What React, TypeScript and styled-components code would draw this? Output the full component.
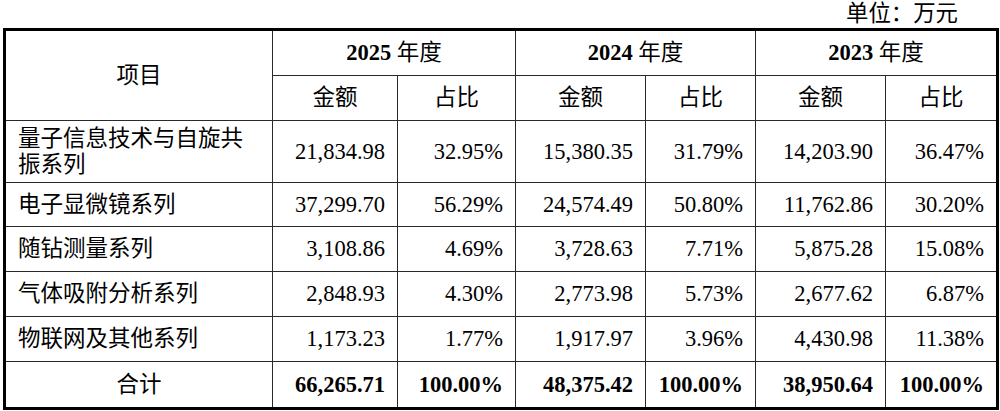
import React from "react";
import styled, { createGlobalStyle } from "styled-components";

const GlobalStyle = createGlobalStyle`
  html, body {
    margin: 0;
    padding: 0;
    background: #ffffff;
  }
  body {
    font-family: "Liberation Serif", "Noto Sans CJK SC", serif;
    color: #000;
  }
`;

const Page = styled.div`
  width: 1000px;
  height: 411px;
  display: flex;
  flex-direction: column;
  padding-left: 3px;
  box-sizing: border-box;
  overflow: hidden;
`;

const UnitLine = styled.div`
  height: 28px;
  display: flex;
  align-items: center;
  justify-content: flex-end;
  padding-right: 42px;
  font-size: 22.4px;
  line-height: 28px;
`;

const Table = styled.table`
  width: 993px;
  table-layout: fixed;
  border-collapse: collapse;
  border: 3px solid #000;
  font-size: 22.5px;
  line-height: 26px;
`;

const Row = styled.tr<{ $h: number }>`
  height: ${(p) => p.$h}px;
`;

const Cell = styled.td<{ $align?: "left" | "center" | "right"; $bold?: boolean }>`
  border: 1px solid #2a2a2a;
  padding: 0 12px;
  vertical-align: middle;
  text-align: ${(p) => p.$align ?? "right"};
  font-weight: ${(p) => (p.$bold ? 700 : 400)};
  word-break: break-all;
`;

const HeadCell = styled.th`
  border: 1px solid #2a2a2a;
  padding: 0 8px;
  vertical-align: middle;
  text-align: center;
  font-weight: 400;
`;

const Year = styled.b`
  font-weight: 700;
`;

const colWidths = [268, 125, 118, 130, 110, 130, 112];

type DataRow = { name: string; vals: string[]; h: number };

const rows: DataRow[] = [
  { name: "量子信息技术与自旋共振系列", vals: ["21,834.98", "32.95%", "15,380.35", "31.79%", "14,203.90", "36.47%"], h: 62 },
  { name: "电子显微镜系列", vals: ["37,299.70", "56.29%", "24,574.49", "50.80%", "11,762.86", "30.20%"], h: 44 },
  { name: "随钻测量系列", vals: ["3,108.86", "4.69%", "3,728.63", "7.71%", "5,875.28", "15.08%"], h: 45 },
  { name: "气体吸附分析系列", vals: ["2,848.93", "4.30%", "2,773.98", "5.73%", "2,677.62", "6.87%"], h: 45 },
  { name: "物联网及其他系列", vals: ["1,173.23", "1.77%", "1,917.97", "3.96%", "4,430.98", "11.38%"], h: 45 },
];

const totals = ["66,265.71", "100.00%", "48,375.42", "100.00%", "38,950.64", "100.00%"];
const years = ["2025", "2024", "2023"];

export default function App() {
  return (
    <>
      <GlobalStyle />
      <Page>
        <UnitLine>单位：万元</UnitLine>
        <Table>
          <colgroup>
            {colWidths.map((w, i) => (
              <col key={i} style={{ width: w }} />
            ))}
          </colgroup>
          <thead>
            <Row $h={46}>
              <HeadCell rowSpan={2}>项目</HeadCell>
              {years.map((y) => (
                <HeadCell key={y} colSpan={2}>
                  <Year>{y}</Year> 年度
                </HeadCell>
              ))}
            </Row>
            <Row $h={45}>
              {years.map((y) => (
                <React.Fragment key={y}>
                  <HeadCell>金额</HeadCell>
                  <HeadCell>占比</HeadCell>
                </React.Fragment>
              ))}
            </Row>
          </thead>
          <tbody>
            {rows.map((r) => (
              <Row key={r.name} $h={r.h}>
                <Cell $align="left">{r.name}</Cell>
                {r.vals.map((v, i) => (
                  <Cell key={i}>{v}</Cell>
                ))}
              </Row>
            ))}
            <Row $h={47}>
              <Cell $align="center">合计</Cell>
              {totals.map((v, i) => (
                <Cell key={i} $bold>
                  {v}
                </Cell>
              ))}
            </Row>
          </tbody>
        </Table>
      </Page>
    </>
  );
}
